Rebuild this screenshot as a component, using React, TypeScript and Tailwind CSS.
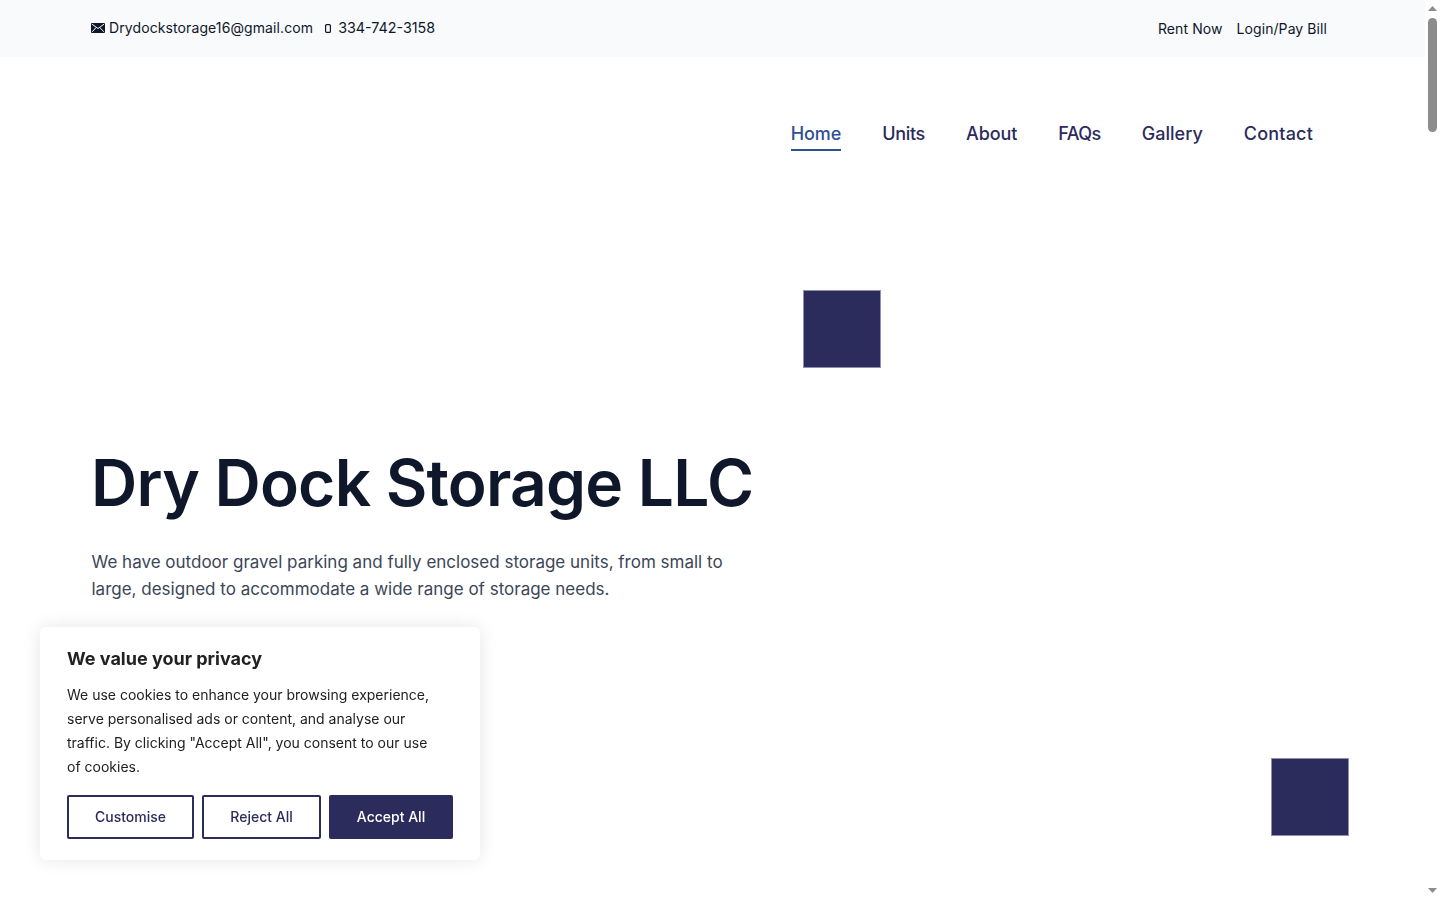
import React from "react";

const inter = "font-['Inter',sans-serif]";

function Mail() {
  return (
    <svg width="14" height="10" viewBox="0 0 14 10" className="shrink-0 mt-px">
      <rect width="14" height="10" rx="1" fill="#0f172a" />
      <path d="M1 1.2 7 5.5l6-4.3M1.2 8.8 5.2 4.5M12.8 8.8 8.8 4.5" stroke="#f8fafc" strokeWidth="1" fill="none" />
    </svg>
  );
}

function Phone() {
  return (
    <svg width="6" height="9" viewBox="0 0 6 9" className="shrink-0 mt-px">
      <rect x="0.6" y="0.6" width="4.8" height="7.8" rx="1" fill="none" stroke="#0f172a" strokeWidth="1.2" />
    </svg>
  );
}

function Scrollbar() {
  return (
    <div className="fixed top-0 right-0 bottom-0 w-[15px] bg-white flex flex-col items-center">
      <svg width="15" height="15" viewBox="0 0 15 15" className="shrink-0">
        <path d="M3 11 7.5 6 12 11Z" fill="#8c8c8c" />
      </svg>
      <div className="w-[9px] h-[114px] mt-[3px] rounded-full bg-[#8c8c8c]" />
      <svg width="15" height="15" viewBox="0 0 15 15" className="shrink-0 mt-auto">
        <path d="M3 3 7.5 8 12 3Z" fill="#8c8c8c" />
      </svg>
    </div>
  );
}

export default function App() {
  return (
    <div className={`${inter} h-[900px] overflow-hidden bg-white text-[#0f172a]`}>
      <div className="w-[1425px]">
        <div className="h-[57px] bg-[#f8fafc] pl-[91px] pr-[98px] flex items-center justify-between text-[14px]">
          <div className="flex items-center -mt-[2px]">
            <Mail />
            <span className="ml-1 tracking-[0.1px]">Drydockstorage16@gmail.com</span>
            <span className="ml-3 flex"><Phone /></span>
            <span className="ml-[7px] text-[14.3px]">334-742-3158</span>
          </div>
          <div className="flex items-center gap-[14px] tracking-[0.08px]">
            <span>Rent Now</span>
            <span>Login/Pay Bill</span>
          </div>
        </div>

        <nav className="h-[152px] pr-[112px] flex justify-end items-start pt-[63px] gap-[41px] text-[18px] font-medium text-[#2b2b5c]">
          <span className="relative h-[31px] leading-[27px] text-[#2f4f94] border-b-2 border-[#2f4f94] tracking-[-0.1px]">Home</span>
          <span className="leading-[27px] tracking-[-0.3px]">Units</span>
          <span className="leading-[27px] tracking-[-0.1px]">About</span>
          <span className="leading-[27px] tracking-[-0.5px]">FAQs</span>
          <span className="leading-[27px]">Gallery</span>
          <span className="leading-[27px] tracking-[0.2px]">Contact</span>
        </nav>

        <section className="pl-[91px] pr-[76px] pt-[81px] flex justify-between items-start">
          <div className="w-[680px] pt-[155px]">
            <h1 className="text-[64px] leading-[76px] font-semibold tracking-[-0.75px] text-[#0f172a] whitespace-nowrap">Dry Dock Storage LLC</h1>
            <p className="mt-[28px] ml-[0.5px] text-[17px] leading-[27px] text-[#3b4658] whitespace-nowrap">
              We have outdoor gravel parking and fully enclosed storage units, from small to
              <br />
              large, designed to accommodate a wide range of storage needs.
            </p>
          </div>
          <div className="w-[546px] h-[546px] flex flex-col justify-between">
            <div className="w-[78px] h-[78px] bg-[#2b2b5c] border border-[#8f8fb0] self-start" />
            <div className="w-[78px] h-[78px] bg-[#2b2b5c] border border-[#8f8fb0] self-end" />
          </div>
        </section>
      </div>

      <div className="fixed left-[40px] bottom-[40px] w-[440px] h-[233px] bg-white rounded-[6px] shadow-[0_0_18px_rgba(0,0,0,0.1)] pt-[20px] px-[27px] text-[#212121]">
        <h2 className="text-[18px] leading-[24px] font-bold">We value your privacy</h2>
        <p className="mt-[12px] text-[14px] leading-[24px] whitespace-nowrap">
          We use cookies to enhance your browsing experience,
          <br />
          serve personalised ads or content, and analyse our
          <br />
          traffic. By clicking "Accept All", you consent to our use
          <br />
          of cookies.
        </p>
        <div className="mt-[16px] flex gap-2 text-[14px] leading-[20px]">
          <button className="w-[127px] h-[44px] border-2 border-[#2b2b5c] rounded-[2px] text-[#2b2b5c] font-medium pb-px">Customise</button>
          <button className="w-[119px] h-[44px] border-2 border-[#2b2b5c] rounded-[2px] text-[#2b2b5c] font-medium pb-px">Reject All</button>
          <button className="w-[124px] h-[44px] bg-[#2b2b5c] rounded-[2px] text-white font-medium pb-px">Accept All</button>
        </div>
      </div>
      <Scrollbar />
    </div>
  );
}
